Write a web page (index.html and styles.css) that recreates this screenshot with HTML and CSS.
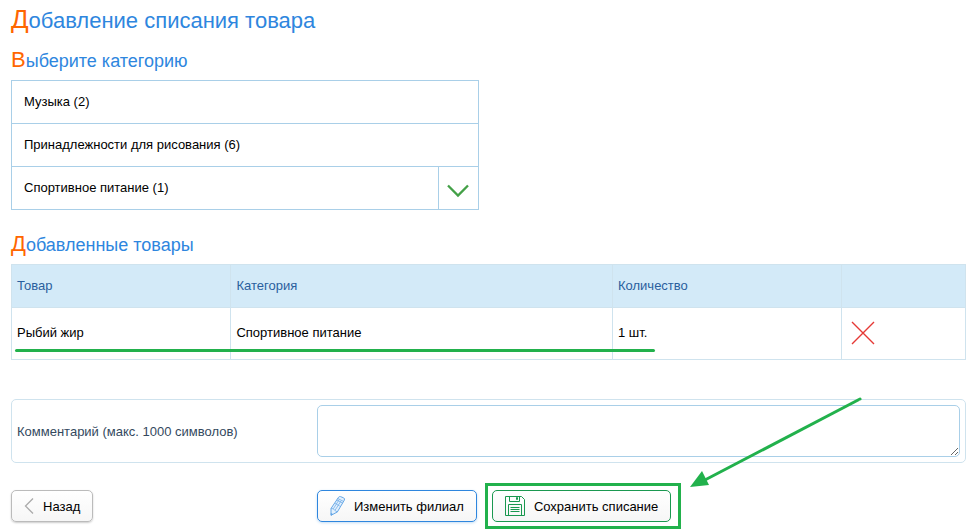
FILE: index.html
```html
<!DOCTYPE html>
<html lang="ru">
<head>
    <meta charset="UTF-8">
    <title>Добавление списания товара</title>
    <link rel="stylesheet" href="styles.css">
</head>
<body>
<h1>Добавление списания товара</h1>

<h2>Выберите категорию</h2>
<ul class="categories">
    <li><a href="#">Музыка (2)</a></li>
    <li><a href="#">Принадлежности для рисования (6)</a></li>
    <li>
        <a href="#">Спортивное питание (1)</a>
        <button type="button" class="toggle" aria-label="Развернуть">
            <svg width="22" height="14" viewBox="0 0 22 14"><path d="M1 1.500l10 10 10-10" fill="none" stroke="#43a047" stroke-width="2.300"/></svg>
        </button>
    </li>
</ul>

<h2>Добавленные товары</h2>
<div class="goods-wrap">
    <table class="goods">
        <thead>
        <tr>
            <th class="col-name">Товар</th>
            <th class="col-category">Категория</th>
            <th class="col-count">Количество</th>
            <th></th>
        </tr>
        </thead>
        <tbody>
        <tr>
            <td>Рыбий жир</td>
            <td>Спортивное питание</td>
            <td>1 шт.</td>
            <td>
                <button type="button" class="remove" aria-label="Удалить">
                    <svg width="24" height="24" viewBox="0 0 24 24"><path d="M1 1l22 22M23 1L1 23" stroke="#e53935" stroke-width="1.4"/></svg>
                </button>
            </td>
        </tr>
        </tbody>
    </table>
    <div class="underline"></div>
</div>

<form>
    <div class="comment">
        <label for="comment">Комментарий (макс. 1000 символов)</label>
        <textarea id="comment" maxlength="1000"></textarea>
    </div>
    <div class="actions">
        <div class="actions-left">
            <button type="button" class="btn btn-back">
                <svg width="10" height="16" viewBox="0 0 10 16"><path d="M9 .5L1.5 8 9 15.5" fill="none" stroke="#aaa" stroke-width="1.3"/></svg>
                Назад
            </button>
        </div>
        <button type="button" class="btn btn-edit">
            <svg width="16" height="20" viewBox="0 0 16 20" fill="none" stroke="#64a6e6">
                <path d="M1 12.500L8.500 1.300Q9.200.3 10.500.6L13.700 1.900Q15 2.600 14.300 4.200L7.300 16 1 19.300z" fill="#e3f0fc"/>
                <path d="M1 12.500l2.300.3 1.400 1.500 2.600 1.700M7.800 2.500l5.700 2.900M6.800 4l5.700 3M3.300 12.800L9.200 3.600M5 14.300l6.200-9.600M5.200 7.300l4.600 2.900" stroke-width=".7"/>
                <path d="M1 17.200l1.900 1.100-1.900 1z" fill="#64a6e6" stroke-width=".5"/>
            </svg>
            Изменить филиал
        </button>
        <div class="highlight">
            <button type="submit" class="btn btn-save">
                <svg width="20" height="20" viewBox="0 0 20 20" fill="none" stroke="#1a9850">
                    <path d="M.5.5h16l3 3v16H.5zM4.500.5v5h10v-5M11.500 1.500h1v2h-1zM3.500 19.500v-11h13v11M5.500 11.500h9M5.500 13.500h9M5.500 15.500h9"/>
                </svg>
                Сохранить списание
            </button>
            <svg class="arrow" width="174" height="92" viewBox="0 0 174 92">
                <path d="M171 3L14 85" stroke="#22b14c" stroke-width="3" stroke-linecap="round"/>
                <path d="M1 91l12-16 7 14z" fill="#22b14c"/>
            </svg>
        </div>
    </div>
</form>
</body>
</html>
```

FILE: styles.css
```css
* {
    box-sizing: border-box;
}
body {
    margin: 0;
    padding: 3px 7px 0 11px;
    background: #fff;
    color: #000;
    font-family: "Liberation Sans", Arial, sans-serif;
    font-size: 13px;
}
h1, h2 {
    margin: 0;
    color: #2e86de;
    font-weight: normal;
}
h1 {
    font-size: 22px;
    line-height: 32px;
}
h2 {
    padding: 6px 0 2px;
    font-size: 18px;
    line-height: 34px;
}
h1::first-letter,
h2::first-letter {
    color: #ff6600;
}
h1::first-letter {
    font-size: 26px;
}
h2::first-letter {
    font-size: 22px;
}

/* categories */
.categories {
    width: 49%;
    margin: 0 0 11px;
    padding: 0;
    list-style: none;
    border: 1px solid #a9cfe8;
}
.categories li {
    display: flex;
    height: 43px;
    border-bottom: 1px solid #a9cfe8;
}
.categories li:last-child {
    height: 42px;
    border-bottom: 0;
}
.categories a {
    flex: 1;
    padding-left: 12px;
    color: #000;
    line-height: 42px;
    text-decoration: none;
}
button {
    font-family: inherit;
    font-size: 13px;
    cursor: pointer;
}
.toggle {
    display: flex;
    align-items: center;
    justify-content: center;
    width: 40px;
    padding: 6px 0 0;
    background: none;
    border: 0;
    border-left: 1px solid #a9cfe8;
}

/* goods */
.goods-wrap {
    position: relative;
}
.goods {
    width: 100%;
    table-layout: fixed;
    border-collapse: collapse;
}
.goods th,
.goods td {
    padding: 0 5px 2px;
    border: 1px solid #cfe3ee;
    text-align: left;
}
.goods th {
    height: 43px;
    background: #d3eaf8;
    color: #2a5f9e;
    font-weight: normal;
}
.goods td {
    height: 52px;
}
.col-name {
    width: 23%;
}
.col-category {
    width: 40%;
}
.col-count {
    width: 24%;
}
.remove {
    display: block;
    padding: 0 4px;
    background: none;
    border: 0;
}
.remove svg {
    display: block;
}
.underline {
    position: absolute;
    left: 4px;
    bottom: 8px;
    width: 67%;
    height: 3px;
    border-radius: 2px;
    background: #22b14c;
}

/* comment */
.comment {
    display: flex;
    align-items: center;
    margin-top: 39px;
    padding: 5px;
    border: 1px solid #cfe3ee;
    border-radius: 5px;
}
.comment label {
    width: 300px;
    color: #34495e;
}
.comment textarea {
    flex: 1;
    display: block;
    height: 52px;
    border: 1px solid #a9cfe8;
    border-radius: 5px;
    outline: 0;
}

/* buttons */
.actions {
    display: flex;
    align-items: center;
    margin-top: 20px;
}
.actions-left {
    width: 306px;
}
.btn {
    display: flex;
    align-items: center;
    height: 32px;
    padding: 0 12px;
    border: 1px solid #bbb;
    border-radius: 5px;
    background: linear-gradient(#fff, #f6f6f6);
    color: #000;
    white-space: nowrap;
}
.btn-back {
    gap: 9px;
    box-shadow: 0 1px 2px #ccc;
}
.btn-edit {
    gap: 8px;
    border-color: #2e86de;
    box-shadow: 0 1px 3px #c4def5;
}
.btn-save {
    gap: 9px;
    border-color: #1a9850;
}
.highlight {
    position: relative;
    margin-left: 8px;
    padding: 4px 7px 4px 4px;
    border: 3px solid #22b14c;
}
.arrow {
    position: absolute;
    left: 201px;
    bottom: 38px;
    pointer-events: none;
}
```
